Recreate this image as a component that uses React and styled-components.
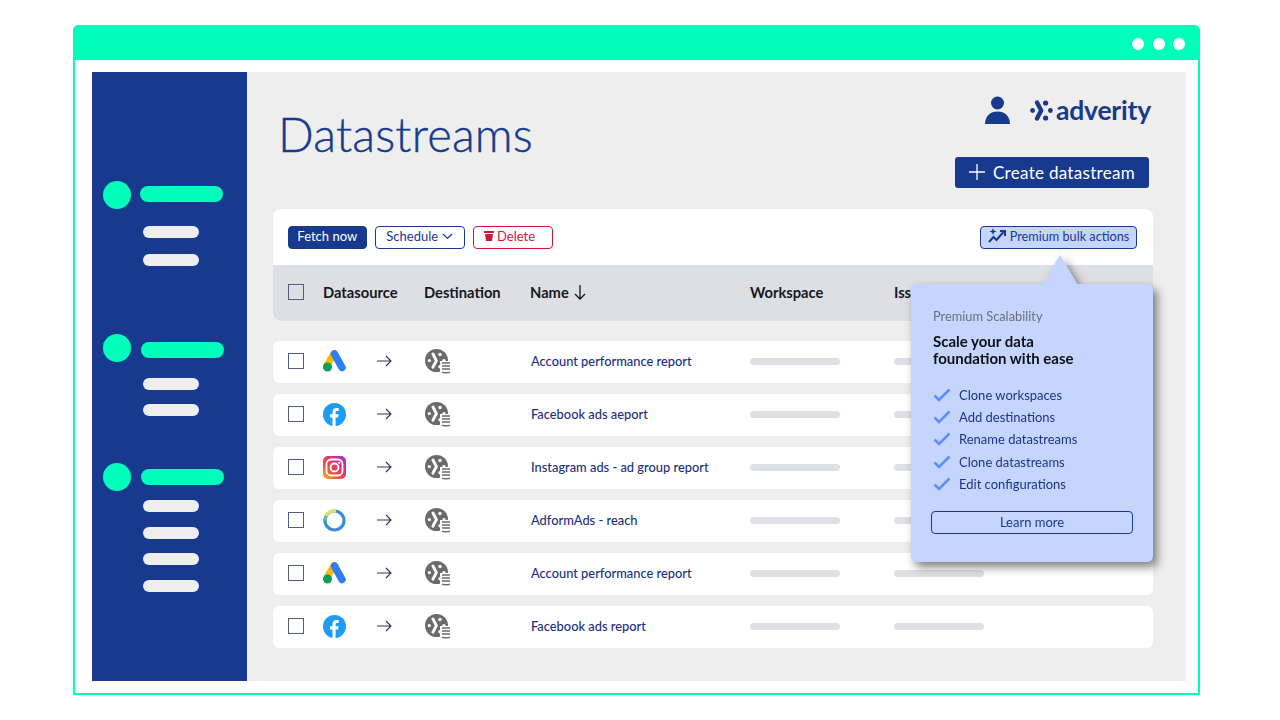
import React from 'react';
import styled, { createGlobalStyle } from 'styled-components';

const GlobalStyle = createGlobalStyle`
  html, body { margin: 0; padding: 0; background: #fff; }
  body { font-family: Lato, "Open Sans", sans-serif; }
  * { box-sizing: border-box; }
`;

const Page = styled.div`
  width: 1280px;
  height: 720px;
  padding: 25px 80px 25px 73px;
  overflow: hidden;
`;

const BrowserWindow = styled.div`
  width: 1127px;
  height: 670px;
  border: 2px solid #00ffbb;
  border-radius: 6px 6px 0 0;
  display: flex;
  flex-direction: column;
`;

const TitleBar = styled.div`
  height: 35px;
  margin: -2px -2px 0;
  background: #00ffbb;
  border-radius: 6px 6px 0 0;
  display: flex;
  align-items: center;
  justify-content: flex-end;
  gap: 8.5px;
  padding: 2px 15px 0 0;
  flex-shrink: 0;
`;

const WindowDot = styled.span`
  width: 12px;
  height: 12px;
  border-radius: 50%;
  background: #fff;
`;

const Shell = styled.div`
  flex: 1;
  min-height: 0;
  display: flex;
  margin: 12px 12px 12px 17px;
`;

const Sidebar = styled.aside`
  width: 155px;
  background: #173a8f;
  padding: 109px 0 0 11px;
  flex-shrink: 0;
`;

const NavGroup = styled.div`
  margin-top: ${(p) => p.$top || 0}px;
`;

const NavHead = styled.div`
  display: flex;
  align-items: center;
  gap: ${(p) => p.$gap}px;
`;

const NavDot = styled.span`
  width: 28px;
  height: 28px;
  border-radius: 50%;
  background: #00ffbb;
`;

const NavBar = styled.span`
  width: 83px;
  height: 16px;
  border-radius: 8px;
  background: #00ffbb;
  margin-top: ${(p) => p.$shift}px;
`;

const SubList = styled.div`
  display: flex;
  flex-direction: column;
  margin: ${(p) => p.$top}px 0 0 40px;
  gap: ${(p) => p.$gap}px;
`;

const SubBar = styled.span`
  width: 56px;
  height: 12px;
  border-radius: 6px;
  background: #eeeeee;
`;

const Main = styled.main`
  flex: 1;
  background: #eeeeee;
  padding: 0 33px 0 26px;
`;

const Header = styled.header`
  height: 137px;
  display: flex;
  justify-content: space-between;
`;

const Title = styled.h1`
  margin: 32px 0 0 5px;
  font-size: 47px;
  line-height: 60px;
  font-weight: 300;
  letter-spacing: 0.2px;
  -webkit-text-stroke: 0.4px #173a8f;
  color: #173a8f;
`;

const HeaderRight = styled.div`
  display: flex;
  flex-direction: column;
  align-items: flex-end;
  padding-top: 21px;
`;

const BrandRow = styled.div`
  display: flex;
  align-items: center;
  height: 34px;
  margin-right: 2px;
`;

const BrandName = styled.span`
  font-size: 26.5px;
  font-weight: 700;
  line-height: 34px;
  color: #173a8f;
  letter-spacing: -0.2px;
  margin-left: 3px;
`;

const CreateButton = styled.button`
  width: 194px;
  height: 31px;
  margin: 30px 4px 0 0;
  border: none;
  border-radius: 3px;
  background: #173a8f;
  color: #fff;
  font: 400 17px Lato, sans-serif;
  letter-spacing: 0.3px;
  display: flex;
  align-items: center;
  justify-content: center;
  gap: 8px;
  padding: 0 0 1px;
`;

const TableArea = styled.section`
  position: relative;
`;

const TableCard = styled.div`
  border-radius: 8px;
  overflow: hidden;
  background: #fff;
`;

const Toolbar = styled.div`
  height: 56px;
  display: flex;
  align-items: center;
  gap: 8px;
  padding: 0 16px 0 15px;
`;

const ActionButton = styled.button`
  width: ${(p) => p.$width}px;
  height: 23px;
  border-radius: 4px;
  border: 1.5px solid ${(p) => p.$color};
  background: ${(p) => (p.$filled ? p.$color : 'transparent')};
  color: ${(p) => (p.$filled ? '#fff' : p.$color)};
  margin-left: ${(p) => (p.$push ? 'auto' : '0')};
  font: 400 13px Lato, sans-serif;
  display: flex;
  align-items: center;
  justify-content: ${(p) => (p.$start ? 'flex-start' : 'center')};
  gap: ${(p) => p.$gap ?? 4}px;
  padding: ${(p) => (p.$start ? '0 0 2px 10px' : '0 0 2px')};
`;

const BulkButton = styled(ActionButton)`
  background: #c6d5fd;
  color: #173a8f;
  font-size: 12.7px;
`;

const rowColumns = '35px 54px 48px 106px 219px 144px 1fr';

const HeadRow = styled.div`
  height: 56px;
  display: grid;
  grid-template-columns: 35px 101px 106px 220px 144px 1fr;
  align-items: center;
  padding: 0 0 2px 15px;
  background: #dedfe3;
  font-size: 14.7px;
  font-weight: 700;
  color: #16181f;
`;

const NameHead = styled.span`
  display: flex;
  align-items: center;
  gap: 5px;
`;

const Check = styled.span`
  display: block;
  width: 16px;
  height: 16px;
  border: 1.5px solid #515c80;
`;

const Rows = styled.div`
  display: flex;
  flex-direction: column;
  gap: 11px;
  margin-top: 20px;
`;

const Row = styled.div`
  height: 42px;
  display: grid;
  grid-template-columns: ${rowColumns};
  align-items: center;
  padding: 0 0 2px 15px;
  background: #fff;
  border-radius: 6px;
`;

const RowName = styled.span`
  font-size: 12.85px;
  font-weight: 500;
  color: #1b2f80;
`;

const Placeholder = styled.span`
  display: block;
  width: 90px;
  height: 7px;
  border-radius: 4px;
  background: #dfe0e5;
`;

const IconCell = styled.span`
  display: flex;
  align-items: center;
`;

const Popover = styled.div`
  position: absolute;
  left: 638px;
  top: 75px;
  width: 242px;
  height: 278px;
  background: #c6d5fd;
  border-radius: 6px;
  padding: 24px 20px 0 22px;
  filter: drop-shadow(4px 5px 5px rgba(0, 0, 0, 0.5));

  &::before {
    content: '';
    position: absolute;
    left: 131px;
    top: -29px;
    width: 36px;
    height: 30px;
    background: #c6d5fd;
    clip-path: polygon(50% 0, 100% 100%, 0 100%);
  }
`;

const Eyebrow = styled.div`
  font-size: 12.8px;
  line-height: 16px;
  color: #6c6e78;
`;

const PopTitle = styled.div`
  margin-top: 9px;
  font-size: 15px;
  line-height: 17px;
  font-weight: 700;
  color: #0d0f17;
`;

const Features = styled.ul`
  list-style: none;
  margin: 17px 0 0;
  padding: 0;
  display: flex;
  flex-direction: column;
`;

const Feature = styled.li`
  height: 22.2px;
  display: flex;
  align-items: center;
  gap: 8px;
  font-size: 13px;
  color: #1b3585;
`;

const LearnButton = styled.button`
  display: block;
  width: 202px;
  height: 23px;
  margin: 16px 0 0 -2px;
  border: 1.5px solid #173a8f;
  border-radius: 4px;
  background: transparent;
  color: #173a8f;
  font: 400 13px Lato, sans-serif;
  padding: 0 0 1px;
`;

const PersonIcon = () => (
  <svg width="25" height="28" viewBox="0 0 25 28" style={{ marginRight: 20 }}>
    <circle cx="12.5" cy="7" r="6.5" fill="#173a8f" />
    <path d="M0 28c0-8 5.5-12.5 12.5-12.5S25 20 25 28z" fill="#173a8f" />
  </svg>
);

const AdverityMark = ({ color = '#173a8f', size = 23 }) => (
  <svg width={size} height={size} viewBox="0 0 23 21">
    <circle cx="2.6" cy="10.5" r="2.4" fill={color} />
    <path d="M7 2.5l4.2 8-4.2 8" fill="none" stroke={color} strokeWidth="4.4" strokeLinecap="round" strokeLinejoin="round" />
    <circle cx="15.6" cy="3" r="2.6" fill={color} />
    <circle cx="20.4" cy="10.5" r="2.4" fill={color} />
    <circle cx="15.6" cy="18" r="2.6" fill={color} />
  </svg>
);

const PlusIcon = () => (
  <svg width="16" height="16" viewBox="0 0 16 16">
    <path d="M8 0v16M0 8h16" stroke="#fff" strokeWidth="1.3" />
  </svg>
);

const ChevronIcon = () => (
  <svg width="11" height="7" viewBox="0 0 11 7">
    <path d="M1 1l4.5 4.5L10 1" fill="none" stroke="#173a8f" strokeWidth="1.2" />
  </svg>
);

const TrashIcon = () => (
  <svg width="10" height="10" viewBox="0 0 10 10">
    <path d="M0 0h10v2H0zM1 3h8L8 10H2z" fill="#d6123f" />
  </svg>
);

const SparkChartIcon = () => (
  <svg width="18" height="16" viewBox="0 0 18 16">
    <path d="M1 14l4.500-5 3 3L15.500 4" fill="none" stroke="#173a8f" strokeWidth="2" />
    <path d="M12 3h5v5" fill="none" stroke="#173a8f" strokeWidth="2" />
    <path d="M5 0l.9 2.600L8.500 3.500l-2.600.9L5 7l-.9-2.600L1.500 3.500l2.600-.9z" fill="#173a8f" />
  </svg>
);

const SortArrow = () => (
  <svg width="12" height="15" viewBox="0 0 12 15">
    <path d="M6 0v14M1 9l5 5 5-5" fill="none" stroke="#16181f" strokeWidth="1.3" />
  </svg>
);

const RowArrow = () => (
  <svg width="15" height="12" viewBox="0 0 15 12">
    <path d="M0 6h14M9 1l5 5-5 5" fill="none" stroke="#2c3559" strokeWidth="1.1" />
  </svg>
);

const CheckMark = () => (
  <svg width="18" height="14" viewBox="0 0 18 14">
    <path d="M1.500 7.500l4.500 4.500L16.500 1.500" fill="none" stroke="#5b8eff" strokeWidth="2.600" />
  </svg>
);

const GoogleAds = () => (
  <svg width="23" height="22" viewBox="0 0 23 22">
    <path d="M11 3.500L3.500 16.500" stroke="#fbbc04" strokeWidth="7" strokeLinecap="round" />
    <path d="M11.500 4l7.500 13.500" stroke="#2f7df6" strokeWidth="7.500" strokeLinecap="round" />
    <circle cx="4.500" cy="17" r="4.500" fill="#0f9d58" />
  </svg>
);

const Facebook = () => (
  <svg width="23" height="23" viewBox="0 0 23 23">
    <circle cx="11.500" cy="11.500" r="11.500" fill="#1b9cf5" />
    <path d="M9.500 23v-8.500H7v-3.300h2.500V9c0-2.700 1.600-4.100 4-4.100 1 0 1.900.1 2.200.1v2.900h-1.500c-1.300 0-1.600.7-1.600 1.600v1.700h3l-.5 3.300h-2.500V23z" fill="#fff" />
  </svg>
);

const Instagram = () => (
  <svg width="23" height="23" viewBox="0 0 23 23">
    <defs>
      <linearGradient id="ig" x1="0" y1="1" x2="1" y2="0">
        <stop offset="0" stopColor="#fdb32b" />
        <stop offset="0.35" stopColor="#f0503a" />
        <stop offset="0.7" stopColor="#d12f8f" />
        <stop offset="1" stopColor="#9a3cc0" />
      </linearGradient>
    </defs>
    <rect width="23" height="23" rx="5" fill="url(#ig)" />
    <rect x="3.500" y="3.500" width="16" height="16" rx="4.500" fill="none" stroke="#fff" strokeWidth="1.800" />
    <circle cx="11.500" cy="11.500" r="4" fill="none" stroke="#fff" strokeWidth="1.800" />
    <circle cx="16.200" cy="6.800" r="1.100" fill="#fff" />
  </svg>
);

const Adform = () => (
  <svg width="23" height="23" viewBox="0 0 23 23" fill="none" strokeWidth="3.200">
    <circle cx="11.500" cy="11.500" r="9.500" stroke="#3d8dd0" />
    <path d="M3.200 7A9.500 9.500 0 0 1 13 2.100" stroke="#e4e06a" />
    <path d="M2 11.500A9.500 9.500 0 0 1 3.200 7" stroke="#5fc0a0" />
  </svg>
);

const Destination = () => (
  <svg width="26" height="25" viewBox="0 0 26 25">
    <circle cx="11.500" cy="11.500" r="11.500" fill="#6b6b6b" />
    <g transform="translate(2.200 3) scale(0.82)">
      <circle cx="2.600" cy="10.500" r="2" fill="#fff" />
      <path d="M7 2.500l4.200 8-4.200 8" fill="none" stroke="#fff" strokeWidth="3.600" strokeLinecap="round" strokeLinejoin="round" />
      <circle cx="15.600" cy="3" r="2.100" fill="#fff" />
      <circle cx="20.400" cy="10.500" r="2" fill="#fff" />
      <circle cx="15.600" cy="18" r="2.100" fill="#fff" />
    </g>
    <rect x="15" y="12" width="11" height="13" fill="#fff" />
    <g fill="none" stroke="#6b6b6b" strokeWidth="1.500">
      <path d="M17 14h8" />
      <path d="M17 17h8" />
      <path d="M17 20h8" />
      <path d="M17 23c1 1 7 1 8 0" />
    </g>
  </svg>
);

const rows = [
  { name: 'Account performance report', Icon: GoogleAds },
  { name: 'Facebook ads aeport', Icon: Facebook },
  { name: 'Instagram ads - ad group report', Icon: Instagram },
  { name: 'AdformAds - reach', Icon: Adform },
  { name: 'Account performance report', Icon: GoogleAds },
  { name: 'Facebook ads report', Icon: Facebook },
];

const features = [
  'Clone workspaces',
  'Add destinations',
  'Rename datastreams',
  'Clone datastreams',
  'Edit configurations',
];

const navGroups = [
  { top: 0, gap: 9, shift: -2, subTop: 17, subGap: 16, subs: 2 },
  { top: 68, gap: 10, shift: 4, subTop: 16, subGap: 14, subs: 2 },
  { top: 47, gap: 10, shift: 0, subTop: 9, subGap: 14.5, subs: 4 },
];

export default function App() {
  return (
    <Page>
      <GlobalStyle />
      <BrowserWindow>
        <TitleBar>
          <WindowDot />
          <WindowDot />
          <WindowDot />
        </TitleBar>
        <Shell>
          <Sidebar>
            {navGroups.map((g, i) => (
              <NavGroup key={i} $top={g.top}>
                <NavHead $gap={g.gap}>
                  <NavDot />
                  <NavBar $shift={g.shift} />
                </NavHead>
                <SubList $top={g.subTop} $gap={g.subGap}>
                  {Array.from({ length: g.subs }).map((_, j) => (
                    <SubBar key={j} />
                  ))}
                </SubList>
              </NavGroup>
            ))}
          </Sidebar>
          <Main>
            <Header>
              <Title>Datastreams</Title>
              <HeaderRight>
                <BrandRow>
                  <PersonIcon />
                  <AdverityMark />
                  <BrandName>adverity</BrandName>
                </BrandRow>
                <CreateButton>
                  <PlusIcon />
                  Create datastream
                </CreateButton>
              </HeaderRight>
            </Header>
            <TableArea>
              <TableCard>
                <Toolbar>
                  <ActionButton $width={78.5} $color="#173a8f" $filled>Fetch now</ActionButton>
                  <ActionButton $width={90.5} $color="#173a8f">Schedule <ChevronIcon /></ActionButton>
                  <ActionButton $width={80} $color="#d6123f" $start $gap={3}><TrashIcon /> Delete</ActionButton>
                  <BulkButton $width={157} $color="#173a8f" $push><SparkChartIcon /> Premium bulk actions</BulkButton>
                </Toolbar>
                <HeadRow>
                  <Check />
                  <span>Datasource</span>
                  <span>Destination</span>
                  <NameHead>Name <SortArrow /></NameHead>
                  <span>Workspace</span>
                  <span>Issues</span>
                </HeadRow>
              </TableCard>
              <Rows>
                {rows.map((r, i) => (
                  <Row key={i}>
                    <Check />
                    <IconCell><r.Icon /></IconCell>
                    <IconCell><RowArrow /></IconCell>
                    <IconCell><Destination /></IconCell>
                    <RowName>{r.name}</RowName>
                    <Placeholder />
                    <Placeholder />
                  </Row>
                ))}
              </Rows>
              <Popover>
                <Eyebrow>Premium Scalability</Eyebrow>
                <PopTitle>Scale your data<br />foundation with ease</PopTitle>
                <Features>
                  {features.map((f) => (
                    <Feature key={f}><CheckMark />{f}</Feature>
                  ))}
                </Features>
                <LearnButton>Learn more</LearnButton>
              </Popover>
            </TableArea>
          </Main>
        </Shell>
      </BrowserWindow>
    </Page>
  );
}
